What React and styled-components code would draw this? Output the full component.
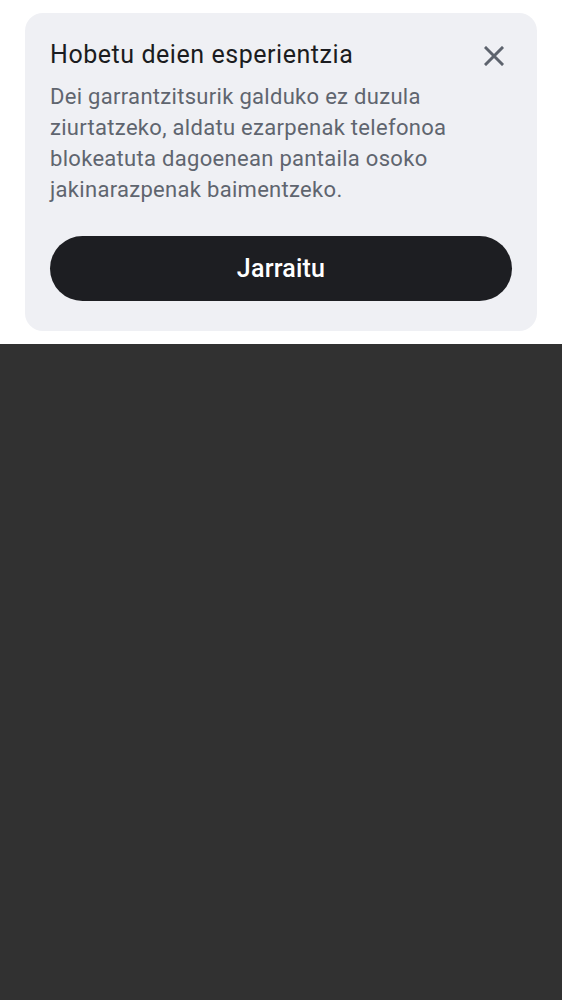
import React from "react";
import styled, { createGlobalStyle } from "styled-components";

const Global = createGlobalStyle`
  html, body {
    margin: 0;
    padding: 0;
    background: #ffffff;
  }
  body {
    font-family: Roboto, "Noto Sans", sans-serif;
  }
`;

const Screen = styled.div`
  width: 562px;
  height: 1000px;
  display: flex;
  flex-direction: column;
`;

const TopArea = styled.div`
  background: #ffffff;
  padding: 13px 25px 13px 25px;
`;

const Card = styled.div`
  background: #eff0f4;
  border-radius: 18px;
  padding: 26px 25px 30px 25px;
`;

const Header = styled.div`
  display: flex;
  justify-content: space-between;
  align-items: flex-start;
`;

const Title = styled.h2`
  margin: 0;
  font-size: 25px;
  font-weight: 400;
  line-height: 32px;
  letter-spacing: 0.55px;
  color: #1b1c20;
`;

const CloseButton = styled.button`
  border: none;
  background: none;
  padding: 0;
  width: 36px;
  height: 36px;
  margin: -1px 0 0 0;
  display: flex;
  align-items: center;
  justify-content: center;
`;

const Body = styled.p`
  margin: 7px 0 0 0;
  font-size: 22px;
  line-height: 31px;
  letter-spacing: 0.3px;
  color: #5f656f;
`;

const PrimaryButton = styled.button`
  margin-top: 31px;
  width: 100%;
  height: 65px;
  border: none;
  border-radius: 33px;
  background: #1d1e22;
  color: #ffffff;
  font-family: Roboto, "Noto Sans", sans-serif;
  font-size: 25px;
  font-weight: 500;
  letter-spacing: 0.2px;
`;

const Backdrop = styled.div`
  flex: 1;
  background: #313131;
`;

const App = () => {
  return (
    <>
      <Global />
      <Screen>
        <TopArea>
          <Card>
            <Header>
              <Title>Hobetu deien esperientzia</Title>
              <CloseButton aria-label="Itxi">
                <svg width="20" height="20" viewBox="0 0 20 20">
                  <path
                    d="M2 2 L18 18 M18 2 L2 18"
                    stroke="#5d636d"
                    strokeWidth="3"
                    strokeLinecap="square"
                  />
                </svg>
              </CloseButton>
            </Header>
            <Body>
              Dei garrantzitsurik galduko ez duzula ziurtatzeko, aldatu
              ezarpenak telefonoa blokeatuta dagoenean pantaila osoko
              jakinarazpenak baimentzeko.
            </Body>
            <PrimaryButton>Jarraitu</PrimaryButton>
          </Card>
        </TopArea>
        <Backdrop />
      </Screen>
    </>
  );
};

export default App;
